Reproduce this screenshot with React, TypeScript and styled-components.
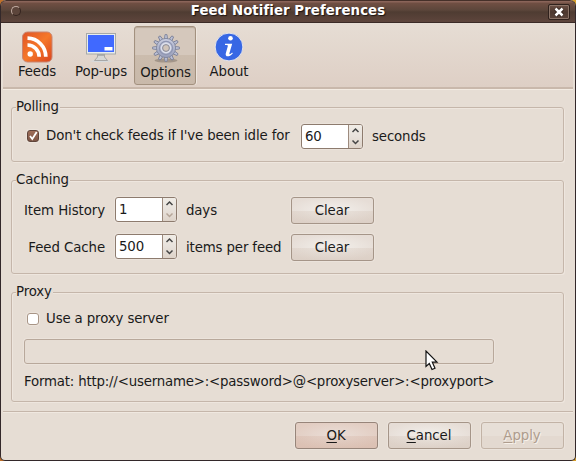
import React from 'react';
import styled, { createGlobalStyle, css } from 'styled-components';

const GlobalStyle = createGlobalStyle`
  * { box-sizing: border-box; }
  body {
    margin: 0;
    background: linear-gradient(90deg, #c0702a, #d8a02b);
    overflow: hidden;
  }
`;

const Window = styled.div`
  position: relative;
  width: 576px;
  height: 461px;
  display: flex;
  flex-direction: column;
  overflow: hidden;
  border: 1px solid #33282a;
  border-top: 0;
  border-radius: 6px 6px 5px 5px;
  background: #e6ddd4;
  color: #1a1a1a;
  font: 13.33px/16px 'DejaVu Sans', sans-serif;
  letter-spacing: -0.13px;
  white-space: nowrap;
`;

const TitleBar = styled.header`
  flex: none;
  height: 23px;
  margin: 0 -1px;
  padding: 0 5px 0 10px;
  display: grid;
  grid-template-columns: 22px 1fr 22px;
  align-items: center;
  border: 1px solid #3a2a26;
  border-top-color: #453029;
  border-radius: 6px 6px 0 0;
  background: linear-gradient(#8a6459 0 1px, #704f43 2px, #5c463b 9px, #4f3c32 11px, #5c443b 20px);
`;

const MenuDot = styled.span`
  width: 10px;
  height: 10px;
  margin-top: -1px;
  border: 1px solid;
  border-color: #c0aaa0 #35241f #35241f #c0aaa0;
  border-radius: 50%;
  background: #5c453b;
`;

const Title = styled.h1`
  margin: -2px 0 0 -5px;
  text-align: center;
  font-size: 13.33px;
  line-height: 16px;
  font-weight: bold;
  letter-spacing: 0.06px;
  color: #fff;
  text-shadow: 1px 1px 1px #1d1411;
`;

const CloseButton = styled.button`
  width: 22px;
  height: 16px;
  padding: 0;
  display: grid;
  place-items: center;
  border: 1px solid #2f211c;
  border-radius: 2px;
  background: linear-gradient(#6d5045, #4c382f 50%, #5a443a);
  box-shadow: inset 0 0 0 1px #8a7367;
`;

const Toolbar = styled.nav`
  flex: none;
  height: 66px;
  margin: 0 2px;
  padding: 3px 3px 0;
  display: flex;
  gap: 2px;
  border-bottom: 2px solid #c9b8ab;
  box-shadow: 0 1px #f3ebe2;
  background: linear-gradient(#e6ddd4, #decfc5);
`;

const Tool = styled.button<{ $active?: boolean }>`
  width: 62px;
  height: 59px;
  padding: ${p => (p.$active ? '5px 0 0 1px' : '4px 0 0')};
  display: flex;
  flex-direction: column;
  align-items: center;
  gap: 1px;
  border: 1px solid transparent;
  border-radius: 3px;
  background: none;
  color: inherit;
  font: inherit;
  letter-spacing: -0.1px;
  ${p => p.$active && css`
    border-color: #a3917f;
    background: linear-gradient(#d5c8bc 0 49%, #cbbcad 50%, #c9b9aa);
    box-shadow: inset 0 1px 1px #b9a999, 1px 0 #eee6de;
  `}
`;

const ToolIcon = styled.svg`
  display: block;
  width: 32px;
  height: 32px;
  flex: none;
`;

const Pages = styled.main`
  flex: none;
  height: 322px;
  padding: 18px 11px 0 10px;
  display: flex;
  flex-direction: column;
  gap: 18px;
`;

const Group = styled.section<{ $height: number }>`
  flex: none;
  height: ${p => p.$height}px;
  padding: 0 12px;
  border: 1px solid #c5b6aa;
  border-radius: 3px;
  box-shadow: inset 1px 1px #eee6de, 1px 1px #eee6de;
`;

const Legend = styled.h2`
  width: max-content;
  height: 16px;
  margin: -9px 0 0 -8px;
  padding-right: 1px;
  background: #e6ddd4;
  font: inherit;
`;

const IdleRow = styled.div`
  height: 25px;
  margin-top: 9px;
  display: flex;
  align-items: center;
`;

const CheckLabel = styled.label<{ $width?: number }>`
  width: ${p => (p.$width ? `${p.$width}px` : 'auto')};
  height: 16px;
  padding-left: 3px;
  display: flex;
  align-items: center;
  gap: 7px;
`;

const CheckBox = styled.span<{ $on?: boolean }>`
  width: 12px;
  height: 12px;
  margin-top: -1px;
  flex: none;
  border: 1px solid ${p => (p.$on ? '#5f443a' : '#a89586')};
  border-radius: 3px;
  background: ${p => (p.$on ? 'linear-gradient(#a06e59, #7d5646)' : '#fff')};
  box-shadow: 0 0 0 1px #ece4dc;

  svg { display: block; overflow: visible; }
`;

const CheckText = styled.span`
  margin-top: -1px;
`;

const Unit = styled.span`
  padding-left: 9px;
`;

const SpinFrame = styled.div`
  width: 62px;
  height: 25px;
  display: grid;
  grid-template-columns: 46px 1fr;
  border: 1px solid #8d7b6e;
  border-radius: 3px;
  background: #fff;
  box-shadow: 0 0 0 1px #ebe3db;
  overflow: hidden;
`;

const SpinValue = styled.span`
  padding: 4px 0 0 3px;
`;

const Arrows = styled.span`
  border-left: 1px solid #9d8b7e;
  background: linear-gradient(#f0ece6, #e8e2dc 48%, #ded3c9);

  svg { display: block; }
`;

const CacheGrid = styled.div`
  margin-top: 9px;
  display: grid;
  grid-template-columns: 81px 10px 62px 114px 83px;
  grid-auto-rows: 27px;
  row-gap: 10px;
`;

const FieldLabel = styled.span`
  padding-top: 6px;
  text-align: right;
  letter-spacing: -0.08px;
`;

const FieldUnit = styled.span`
  grid-column: 4;
  padding: 6px 0 0 9px;
`;

const SpinCell = styled.div`
  grid-column: 3;
`;

type Tone = 'normal' | 'primary' | 'disabled';

const tones = {
  normal: css`
    border-color: #a59588;
    background: linear-gradient(transparent 50%, rgba(200, 180, 165, 0.2) 51%, rgba(200, 180, 165, 0.32)),
      radial-gradient(ellipse at center, #f3f0ec, #e6ddd6 80%);
  `,
  primary: css`
    border-color: #97857a;
    background: linear-gradient(transparent 50%, rgba(200, 155, 135, 0.18) 51%, rgba(200, 155, 135, 0.26)),
      radial-gradient(ellipse at center, #eaded7, #e2cdc2 80%);
  `,
  disabled: css`
    border-color: #c2b3a6;
    background: linear-gradient(#e7dfd7 50%, #e3d9d0 51%);
    color: #ae9c8d;
    text-shadow: 1px 1px #f7f1ea;
  `,
};

const Button = styled.button<{ $tone?: Tone }>`
  width: 83px;
  height: 27px;
  padding: 1px 1px 0 0;
  border: 1px solid;
  border-radius: 3px;
  box-shadow: 0 0 0 1px #ebe3db;
  color: #1a1a1a;
  font: inherit;
  letter-spacing: -0.05px;
  ${p => tones[p.$tone ?? 'normal']}
`;

const Mnemonic = styled.span`
  text-decoration: underline;
  text-decoration-thickness: 1px;
  text-underline-offset: 2px;
`;

const ProxyBody = styled.div`
  margin-top: 11px;
  display: flex;
  flex-direction: column;
`;

const Entry = styled.input`
  width: 470px;
  height: 25px;
  margin-top: 12px;
  border: 1px solid #b8a89b;
  border-radius: 3px;
  background: #e6ddd4;
  box-shadow: 0 0 0 1px #ebe3db;
`;

const Hint = styled.p`
  margin: 10px 0 0;
  letter-spacing: -0.19px;
`;

const Footer = styled.footer`
  margin: 0 2px;
  padding: 10px 9px 0;
  height: 49px;
  display: flex;
  justify-content: flex-end;
  gap: 10px;
  border-top: 1px solid #c5b6aa;
  box-shadow: inset 0 1px #f0e8e0;
`;

const Pointer = styled.svg`
  position: absolute;
  left: 424px;
  top: 350px;
`;

const FeedIcon = () => (
  <ToolIcon viewBox="0 0 32 32">
    <defs>
      <linearGradient id="feed" x1="0" y1="0" x2="1" y2="1">
        <stop offset="0" stopColor="#df5427" />
        <stop offset=".5" stopColor="#f5782a" />
        <stop offset="1" stopColor="#d9431d" />
      </linearGradient>
    </defs>
    <rect x="1.5" y="1" width="29.5" height="30" rx="5" fill="url(#feed)" stroke="#c98673" />
    <circle cx="9.2" cy="23" r="2.7" fill="#fff" />
    <path d="M6.5 14A11.8 11.8 0 0 1 18.2 25.8M6.5 7.2A18.6 18.6 0 0 1 24.8 25.8" fill="none" stroke="#fff" strokeWidth="3.7" />
  </ToolIcon>
);

const MonitorIcon = () => (
  <ToolIcon viewBox="0 0 32 32">
    <ellipse cx="16" cy="30" rx="11" ry="1.2" fill="#d6dadc" />
    <path d="M12.5 23h7v3l3 3.5h-13l3-3.5z" fill="#d7d7d5" stroke="#9b9b9b" strokeWidth=".8" />
    <path d="M13 24h6" stroke="#888" />
    <rect x="1.5" y="2.5" width="29" height="20.5" fill="#e7ecec" stroke="#a7a9a8" />
    <rect x="3" y="4" width="26" height="17" fill="#4069ff" />
    <rect x="19.5" y="16" width="8" height="3.5" fill="#fff" />
  </ToolIcon>
);

const GearIcon = () => (
  <ToolIcon viewBox="0 0 32 32">
    <defs>
      <linearGradient id="gear" x1="0" y1="0" x2="0" y2="1">
        <stop offset="0" stopColor="#c9cde0" />
        <stop offset="1" stopColor="#989eb9" />
      </linearGradient>
    </defs>
    <ellipse cx="16" cy="28.5" rx="11.5" ry="2" fill="#8e8177" opacity=".65" />
    <g fill="#bcc1d6" stroke="#777d95" strokeWidth=".8">
      {Array.from({ length: 12 }, (_, i) => (
        <path key={i} d="M14.4 7 15 2.6h2L17.6 7z" transform={`rotate(${i * 30} 16 16)`} />
      ))}
    </g>
    <circle cx="16" cy="16" r="9.6" fill="url(#gear)" stroke="#7e849b" strokeWidth=".8" />
    <circle cx="16" cy="16" r="6.6" fill="none" stroke="#8f96b2" strokeWidth="1.2" />
    <circle cx="16" cy="16" r="4.5" fill="none" stroke="#dcdfeb" strokeWidth="1.8" />
    <circle cx="16" cy="16" r="3.4" fill="#d0c4b9" stroke="#858795" strokeWidth=".9" />
  </ToolIcon>
);

const InfoIcon = () => (
  <ToolIcon viewBox="0 0 32 32">
    <circle cx="16" cy="16" r="13.9" fill="#3767e4" stroke="#e6e6ec" strokeWidth="1" />
    <circle cx="17.5" cy="7.2" r="2.3" fill="#fff" />
    <path d="M12 12.7h7.2l-2.8 9.5c-.3 1.2.5 1.5 1.7.3l1-.9.7.8c-3.8 4.1-8 3.7-7-.2l2-7c.3-1-.2-1.2-2.8-1.2z" fill="#fff" />
  </ToolIcon>
);

const Spin = ({ value, atMin }: { value: string; atMin?: boolean }) => (
  <SpinFrame>
    <SpinValue>{value}</SpinValue>
    <Arrows>
      <svg width="13" height="23" fill="none" strokeWidth="1.5">
        <path d="M3.5 7 6.5 4 9.5 7" stroke="#444" />
        <path d="M3.5 15.5 6.5 18.5 9.5 15.5" stroke={atMin ? '#b5a598' : '#444'} />
      </svg>
    </Arrows>
  </SpinFrame>
);

const cacheRows = [
  { label: 'Item History', value: '1', unit: 'days', atMin: true },
  { label: 'Feed Cache', value: '500', unit: 'items per feed', atMin: false },
];

export default function App() {
  return (
    <>
      <GlobalStyle />
      <Window>
        <TitleBar>
          <MenuDot />
          <Title>Feed Notifier Preferences</Title>
          <CloseButton aria-label="Close">
            <svg width="10" height="10" viewBox="0 0 10 10">
              <path d="M1.5 1.5 8.5 8.5M8.5 1.5 1.5 8.5" stroke="#2b1d18" strokeWidth="4" />
              <path d="M1.5 1.5 8.5 8.5M8.5 1.5 1.5 8.5" stroke="#fff" strokeWidth="2.5" />
            </svg>
          </CloseButton>
        </TitleBar>

        <Toolbar>
          <Tool><FeedIcon />Feeds</Tool>
          <Tool><MonitorIcon />Pop-ups</Tool>
          <Tool $active><GearIcon />Options</Tool>
          <Tool><InfoIcon />About</Tool>
        </Toolbar>

        <Pages>
          <Group $height={55}>
            <Legend>Polling</Legend>
            <IdleRow>
              <CheckLabel $width={277}>
                <CheckBox $on>
                  <svg width="10" height="10" viewBox="0 0 10 10" fill="none">
                    <path d="M2 5 4.3 8 8.7 1" stroke="#fff" strokeWidth="1.8" />
                  </svg>
                </CheckBox>
                <CheckText>Don't check feeds if I've been idle for</CheckText>
              </CheckLabel>
              <Spin value="60" />
              <Unit>seconds</Unit>
            </IdleRow>
          </Group>

          <Group $height={94}>
            <Legend>Caching</Legend>
            <CacheGrid>
              {cacheRows.map(row => (
                <React.Fragment key={row.label}>
                  <FieldLabel>{row.label}</FieldLabel>
                  <SpinCell><Spin value={row.value} atMin={row.atMin} /></SpinCell>
                  <FieldUnit>{row.unit}</FieldUnit>
                  <Button>Clear</Button>
                </React.Fragment>
              ))}
            </CacheGrid>
          </Group>

          <Group $height={110}>
            <Legend>Proxy</Legend>
            <ProxyBody>
              <CheckLabel>
                <CheckBox />
                <CheckText>Use a proxy server</CheckText>
              </CheckLabel>
              <Entry disabled />
              <Hint>{'Format: http://<username>:<password>@<proxyserver>:<proxyport>'}</Hint>
            </ProxyBody>
          </Group>
        </Pages>

        <Footer>
          <Button $tone="primary"><Mnemonic>O</Mnemonic>K</Button>
          <Button><Mnemonic>C</Mnemonic>ancel</Button>
          <Button $tone="disabled" disabled><Mnemonic>A</Mnemonic>pply</Button>
        </Footer>

        <Pointer width="14" height="22" viewBox="0 0 14 22">
          <path d="M1 1V16.5L4.3 13.5 7 19.5 10 18.2 7.3 12.2H12z" fill="#fff" stroke="#111" strokeWidth="1.2" />
        </Pointer>
      </Window>
    </>
  );
}
